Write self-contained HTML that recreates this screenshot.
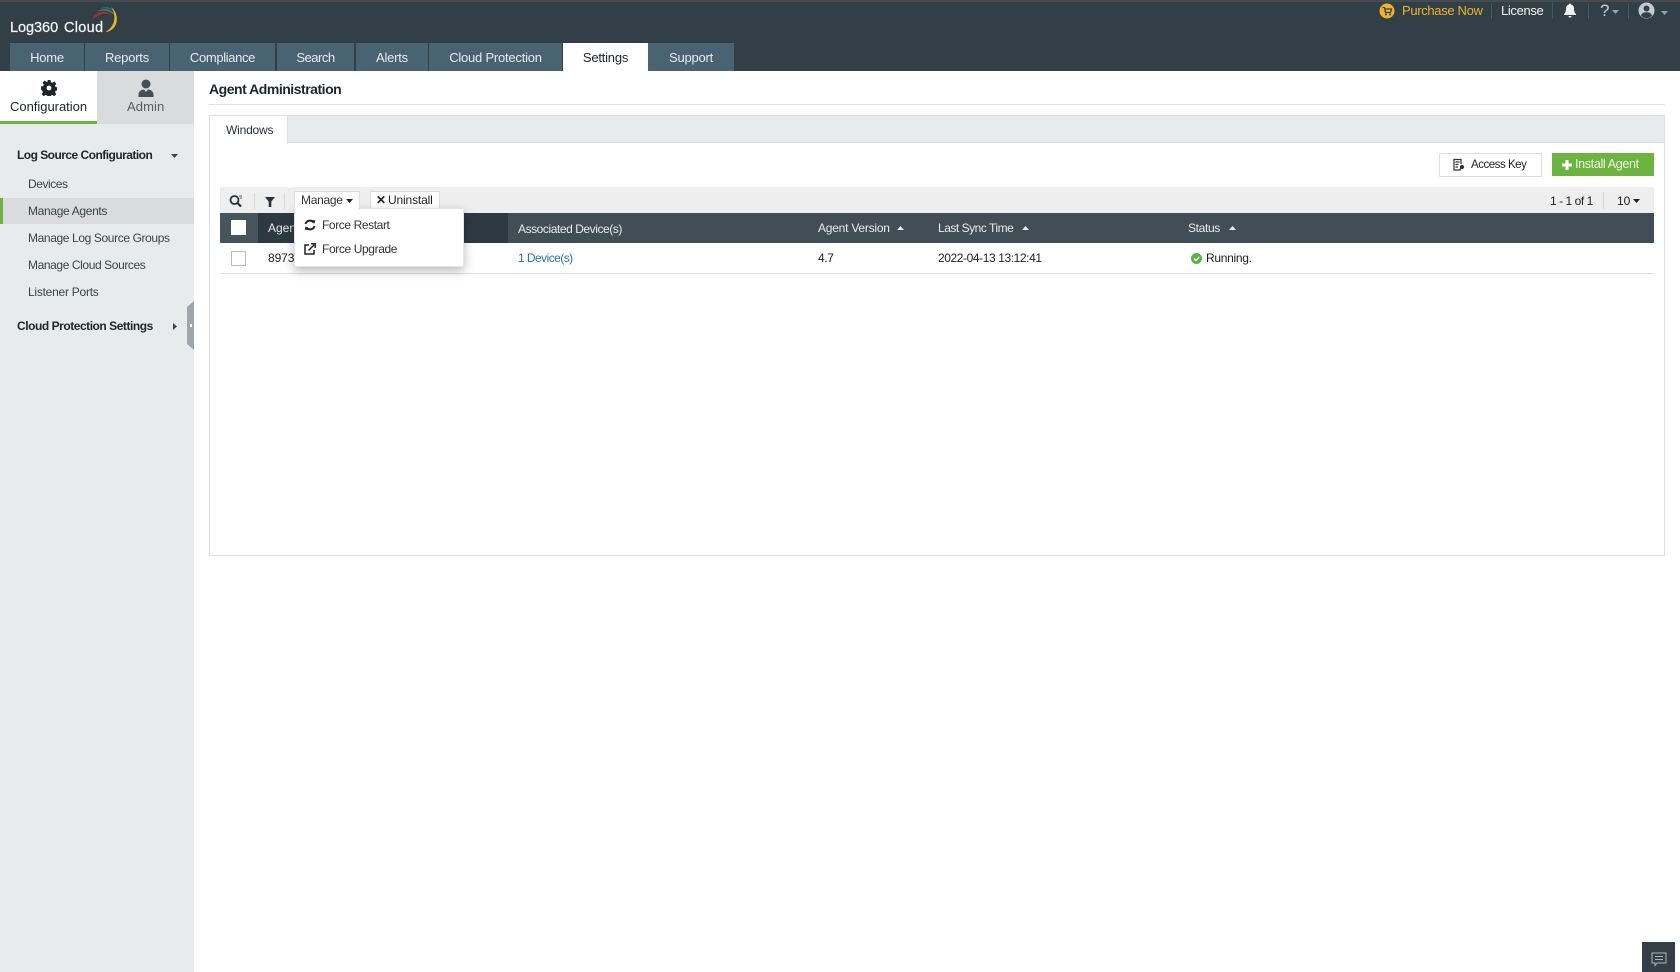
<!DOCTYPE html>
<html lang="en">
<head>
<meta charset="utf-8">
<title>Agent Administration</title>
<style>
html,body{margin:0;padding:0;width:1680px;height:972px;overflow:hidden;background:#fff}
body{position:relative;font-family:"Liberation Sans",sans-serif;font-size:12.5px;color:#222;filter:blur(.3px)}
.b{position:absolute;box-sizing:border-box}
.t{position:absolute;white-space:nowrap;line-height:16px;height:16px;letter-spacing:0}
svg{position:absolute;display:block}
.tab{position:absolute;top:43px;height:28px;background:#4a6373;color:#e6ecef;text-align:center;line-height:29px;font-size:13px;letter-spacing:-.22px}
.side{color:#3c4448;font-size:12px;letter-spacing:-.38px}
.sh{font-weight:bold;color:#1f2628;font-size:12px;letter-spacing:-.53px}
.th{color:#e8eced;font-size:12px}
</style>
</head>
<body>
<!-- header -->
<div class="b" style="left:0;top:0;width:1680px;height:71px;background:#333f47"></div>
<div class="b" style="left:0;top:0;width:1680px;height:2px;background:#454a4e"></div>
<div class="t" style="left:10px;top:20px;color:#f2f5f6;font-size:14.5px;letter-spacing:-.05px;-webkit-text-stroke:.25px #f2f5f6">Log360</div>
<div class="t" style="left:64px;top:20px;color:#f2f5f6;font-size:14.5px;letter-spacing:.3px;-webkit-text-stroke:.25px #f2f5f6">Cloud</div>
<svg style="left:90px;top:4px" width="30" height="30" viewBox="0 0 30 30">
<path d="M2 17C4 8 15 4 23 12C17 8 8 9 2 17z" fill="#a52a3a"/>
<path d="M7 8C13 3 22 4 26 13C21 7 14 5 7 8z" fill="#3a8a4a"/>
<path d="M10 5C15 1.500 22 2.500 26 9C21 4.500 15 3.500 10 5z" fill="#2a62a8"/>
<path d="M21 3C29 9 30 24 17 28L16 27.500C25 23 27 11 21 3z" fill="#e8b923"/>
</svg>

<div class="tab" style="left:10px;width:74px">Home</div>
<div class="tab" style="left:85px;width:84px">Reports</div>
<div class="tab" style="left:170px;width:105px;letter-spacing:-.35px">Compliance</div>
<div class="tab" style="left:277px;width:77px;letter-spacing:-.5px">Search</div>
<div class="tab" style="left:356px;width:72px">Alerts</div>
<div class="tab" style="left:429px;width:133px">Cloud Protection</div>
<div class="tab" style="left:563px;width:85px;background:#fff;color:#1f2628">Settings</div>
<div class="tab" style="left:648px;width:86px">Support</div>

<!-- top right -->
<svg style="left:1379px;top:3px" width="16" height="16" viewBox="0 0 16 16"><circle cx="8" cy="8" r="7.500" fill="#f0b429"/><path d="M3.500 4.500h2l1 5h5l1-3.500H6" fill="none" stroke="#333f47" stroke-width="1.300"/><circle cx="7" cy="11.500" r="1" fill="#333f47"/><circle cx="11" cy="11.500" r="1" fill="#333f47"/></svg>
<div class="t" style="left:1402px;top:3px;color:#e9b52c;font-size:13px;letter-spacing:-.33px">Purchase Now</div>
<div class="b" style="left:1491px;top:3px;width:1px;height:16px;background:#4b5860"></div>
<div class="t" style="left:1501px;top:3px;color:#f1f3f4;font-size:13px;letter-spacing:-.35px">License</div>
<div class="b" style="left:1552px;top:3px;width:1px;height:16px;background:#4b5860"></div>
<svg style="left:1563px;top:3px" width="14" height="15" viewBox="0 0 14 15"><path d="M7 0.500c.7 0 1 .4 1 1 2 .5 3 2 3 4 0 3 .8 4.500 2 5.500v1H1v-1c1.200-1 2-2.500 2-5.500 0-2 1-3.500 3-4 0-.6.300-1 1-1z" fill="#eef1f2"/><path d="M5.500 13h3a1.500 1.500 0 0 1-3 0z" fill="#eef1f2"/></svg>
<div class="b" style="left:1588px;top:3px;width:1px;height:16px;background:#4b5860"></div>
<div class="t" style="left:1600px;top:3px;color:#c8cfd3;font-size:17px">?</div>
<svg style="left:1612px;top:10px" width="8" height="4"><path d="M0 0h7L3.500 4z" fill="#98a3a9"/></svg>
<div class="b" style="left:1628px;top:3px;width:1px;height:16px;background:#4b5860"></div>
<svg style="left:1638px;top:2px" width="17" height="17" viewBox="0 0 17 17"><circle cx="8.500" cy="8.500" r="8" fill="#c3cbd0"/><circle cx="8.500" cy="6.500" r="3" fill="#333f47"/><path d="M3 13.500c1-2.500 3-3.200 5.500-3.200s4.500.7 5.500 3.200a7 7 0 0 1-11 0z" fill="#333f47"/></svg>
<svg style="left:1661px;top:11px" width="8" height="4"><path d="M0 0h7L3.500 4z" fill="#98a3a9"/></svg>

<!-- sidebar -->
<div class="b" style="left:0;top:71px;width:194px;height:901px;background:#e8ebeb"></div>
<div class="b" style="left:0;top:71px;width:97px;height:53px;background:#fff;border-bottom:3px solid #6db33f"></div>
<div class="b" style="left:97px;top:71px;width:97px;height:53px;background:#d9dbdc"></div>
<svg style="left:41px;top:80px" width="16" height="16" viewBox="0 0 16 16"><path d="M6.500 0h3l.4 2.200 1.500.6L13.300 1.500l2 2.100-1.300 1.900.6 1.500 2.200.4v3l-2.200.4-.6 1.400 1.300 1.900-2.100 2.100-1.900-1.300-1.400.6-.4 2.200h-3l-.4-2.200-1.500-.6-1.900 1.300-2.100-2.100 1.300-1.900-.6-1.400L0 9.500v-3l2.200-.4.600-1.500L1.500 2.700l2.100-2.100 1.900 1.300 1.400-.6z" fill="#1e2528"/><circle cx="8" cy="8" r="2.400" fill="#fff"/></svg>
<div class="t" style="left:10px;top:99px;font-size:13px;color:#1f2628;letter-spacing:-.02px">Configuration</div>
<svg style="left:137px;top:79px" width="18" height="18" viewBox="0 0 18 18"><circle cx="9" cy="5" r="4.500" fill="#454f55"/><path d="M1.500 18v-2.500C1.500 12 5 10.500 7 10.500L9 13l2-2.500c2 0 5.500 1.500 5.500 5V18z" fill="#454f55"/></svg>
<div class="t" style="left:127px;top:99px;font-size:13px;color:#555e63;letter-spacing:.1px">Admin</div>

<div class="t sh" style="left:17px;top:147px">Log Source Configuration</div>
<svg style="left:171px;top:154px" width="8" height="5"><path d="M0 0h7L3.500 4z" fill="#3c4448"/></svg>
<div class="t side" style="left:28px;top:176px;letter-spacing:-.45px">Devices</div>
<div class="b" style="left:0;top:198px;width:194px;height:26px;background:#d9dbdc"></div>
<div class="b" style="left:0;top:198px;width:3px;height:26px;background:#6db33f"></div>
<div class="t side" style="left:28px;top:203px;letter-spacing:-.33px">Manage Agents</div>
<div class="t side" style="left:28px;top:230px">Manage Log Source Groups</div>
<div class="t side" style="left:28px;top:257px;letter-spacing:-.4px">Manage Cloud Sources</div>
<div class="t side" style="left:28px;top:284px;letter-spacing:-.25px">Listener Ports</div>
<div class="t sh" style="left:17px;top:318px;letter-spacing:-.46px">Cloud Protection Settings</div>
<svg style="left:173px;top:323px" width="5" height="8"><path d="M0 0l4 3.500L0 7z" fill="#3c4448"/></svg>
<svg style="left:187px;top:301px" width="7" height="49"><path d="M7 0v49L0 43V6z" fill="#9ea6aa"/><rect x="3" y="23" width="2" height="3" fill="#fff"/></svg>

<!-- title -->
<div class="t" style="left:209px;top:81px;font-size:14px;font-weight:bold;color:#1f2628;letter-spacing:-.48px">Agent Administration</div>
<div class="b" style="left:209px;top:104px;width:1456px;height:1px;background:#dfe2e3"></div>

<!-- panel -->
<div class="b" style="left:209px;top:115px;width:1456px;height:441px;border:1px solid #dcdfe0;background:#fff"></div>
<div class="b" style="left:210px;top:116px;width:1454px;height:27px;background:#e8ebeb;border-bottom:1px solid #dcdfe0"></div>
<div class="b" style="left:210px;top:116px;width:78px;height:28px;background:#fff;border-right:1px solid #dcdfe0"></div>
<div class="t" style="left:226px;top:122px;font-size:12px;color:#2a3134;letter-spacing:-.2px">Windows</div>

<!-- buttons -->
<div class="b" style="left:1439px;top:153px;width:103px;height:24px;border:1px solid #dcdfe0;background:#fff"></div>
<svg style="left:1452px;top:158px" width="14" height="14" viewBox="0 0 14 14" fill="none" stroke="#333" stroke-width="1.200"><path d="M8.500 12H2V1.500h7V6"/><path d="M3.500 4h4M3.500 6.500h3M3.500 9h2.500"/><circle cx="10" cy="9" r="1.500" fill="#333"/><path d="M9 10l-1.500 2"/></svg>
<div class="t" style="left:1471px;top:157px;font-size:11.500px;color:#222;letter-spacing:-.47px">Access Key</div>
<div class="b" style="left:1552px;top:153px;width:102px;height:23px;background:#6db33f"></div>
<svg style="left:1562px;top:160px" width="10" height="10"><path d="M3.500 0h3v3.500H10v3H6.500V10h-3V6.500H0v-3h3.500z" fill="#fff"/></svg>
<div class="t" style="left:1575px;top:156px;font-size:12.500px;color:#eef6e8;letter-spacing:-.33px">Install Agent</div>

<!-- toolbar -->
<div class="b" style="left:220px;top:187px;width:1434px;height:26px;background:#eeeeee"></div>
<svg style="left:229px;top:194px" width="14" height="14" viewBox="0 0 14 14" fill="none" stroke="#2a3134"><circle cx="5.500" cy="6" r="4" stroke-width="1.800"/><path d="M8.500 9l3.500 3.500" stroke-width="2.200"/><path d="M10 2h3M11 4h2" stroke-width=".8"/></svg>
<div class="b" style="left:254px;top:193px;width:1px;height:16px;background:#d5d7d8"></div>
<svg style="left:265px;top:197px" width="10" height="10"><path d="M0 0h10L6.300 4.500V10H3.700V4.500z" fill="#2a3134"/></svg>
<div class="b" style="left:284px;top:193px;width:1px;height:16px;background:#d5d7d8"></div>
<div class="b" style="left:294px;top:191px;width:66px;height:19px;background:#fff;border:1px solid #dcdfe0;z-index:3;border-bottom:0"></div>
<div class="t" style="left:301px;top:192px;font-size:12px;color:#333;z-index:4;letter-spacing:-.3px">Manage</div>
<svg style="left:346px;top:199px;z-index:4" width="8" height="5"><path d="M0 0h7L3.500 4z" fill="#222"/></svg>
<div class="b" style="left:370px;top:191px;width:70px;height:18px;background:#fff;border:1px solid #dcdfe0"></div>
<div class="t" style="left:376px;top:192px;font-size:12px;color:#222"><b style="font-weight:bold;font-size:12px">✕</b></div>
<div class="t" style="left:388px;top:192px;font-size:12px;color:#222;letter-spacing:-.15px">Uninstall</div>
<div class="t" style="left:1550px;top:193px;font-size:12px;color:#222;letter-spacing:-.45px">1 - 1 of 1</div>
<div class="b" style="left:1603px;top:192px;width:1px;height:17px;background:#d5d7d8"></div>
<div class="t" style="left:1617px;top:193px;font-size:12px;color:#222">10</div>
<svg style="left:1633px;top:199px" width="8" height="5"><path d="M0 0h7L3.500 4z" fill="#222"/></svg>

<!-- table -->
<div class="b" style="left:220px;top:213px;width:1434px;height:30px;background:#414e55"></div>
<div class="b" style="left:220px;top:213px;width:38px;height:30px;background:#46555c"></div>
<div class="b" style="left:258px;top:213px;width:250px;height:30px;background:#2d3a41"></div>
<div class="b" style="left:231px;top:220px;width:15px;height:15px;background:#fff"></div>
<div class="t th" style="left:268px;top:220px">Agent</div>
<div class="t th" style="left:518px;top:221px;letter-spacing:-.44px">Associated Device(s)</div>
<div class="t th" style="left:818px;top:220px;letter-spacing:-.23px">Agent Version</div>
<svg style="left:897px;top:226px" width="8" height="5"><path d="M0 4h7L3.500 0z" fill="#e8eced"/></svg>
<div class="t th" style="left:938px;top:220px;letter-spacing:-.48px">Last Sync Time</div>
<svg style="left:1022px;top:226px" width="8" height="5"><path d="M0 4h7L3.500 0z" fill="#e8eced"/></svg>
<div class="t th" style="left:1188px;top:220px;letter-spacing:-.35px">Status</div>
<svg style="left:1229px;top:226px" width="8" height="5"><path d="M0 4h7L3.500 0z" fill="#e8eced"/></svg>

<div class="b" style="left:220px;top:273px;width:1434px;height:1px;background:#dcdfe0"></div>
<div class="b" style="left:231px;top:251px;width:15px;height:15px;background:#fff;border:1px solid #b9bdbf"></div>
<div class="t" style="left:268px;top:250px;font-size:12px;letter-spacing:-.1px">8973</div>
<div class="t" style="left:518px;top:250px;font-size:12px;color:#2a74ad;letter-spacing:-.55px">1 Device(s)</div>
<div class="t" style="left:818px;top:250px;font-size:12px;letter-spacing:-.4px">4.7</div>
<div class="t" style="left:938px;top:250px;font-size:12px;letter-spacing:-.41px">2022-04-13 13:12:41</div>
<svg style="left:1191px;top:253px" width="11" height="11" viewBox="0 0 11 11"><circle cx="5.500" cy="5.500" r="5.500" fill="#5cb247"/><path d="M3 5.500l2 2 3.200-3.500" fill="none" stroke="#fff" stroke-width="1.300"/></svg>
<div class="t" style="left:1206px;top:250px;font-size:12px;letter-spacing:-.3px">Running.</div>

<!-- dropdown -->
<div class="b" style="left:294px;top:208px;width:170px;height:59px;background:#fff;border:1px solid #e2e4e5;box-shadow:0 4px 10px rgba(0,0,0,.28);z-index:2"></div>
<svg style="left:304px;top:219px;z-index:3" width="12" height="12" viewBox="0 0 12 12" fill="none" stroke="#222" stroke-width="1.900"><path d="M1.500 5A4.500 4.500 0 0 1 9.500 3.500"/><path d="M10.500 7A4.500 4.500 0 0 1 2.500 8.500"/><path d="M8 1l3.500 0.500L10 5z" fill="#222" stroke="none"/><path d="M4 11L.5 10.500 2 7z" fill="#222" stroke="none"/></svg>
<div class="t" style="left:322px;top:217px;font-size:12px;color:#333;z-index:3;letter-spacing:-.4px">Force Restart</div>
<svg style="left:304px;top:243px;z-index:3" width="12" height="12" viewBox="0 0 12 12" fill="none" stroke="#222" stroke-width="1.500"><path d="M5 2H1v9h9V7"/><path d="M4.500 7.500L10 2"/><path d="M7 .8h4.200V5"/></svg>
<div class="t" style="left:322px;top:241px;font-size:12px;color:#333;z-index:3;letter-spacing:-.38px">Force Upgrade</div>

<!-- chat -->
<div class="b" style="left:1642px;top:942px;width:33px;height:30px;background:#333f47"></div>
<svg style="left:1651px;top:952px" width="16" height="15" viewBox="0 0 16 15" fill="none" stroke="#aeb6ba"><path d="M1 1h14v10H6l-2 2.500V11H1z"/><path d="M4 4.500h8M4 7.500h8"/></svg>
</body>
</html>
